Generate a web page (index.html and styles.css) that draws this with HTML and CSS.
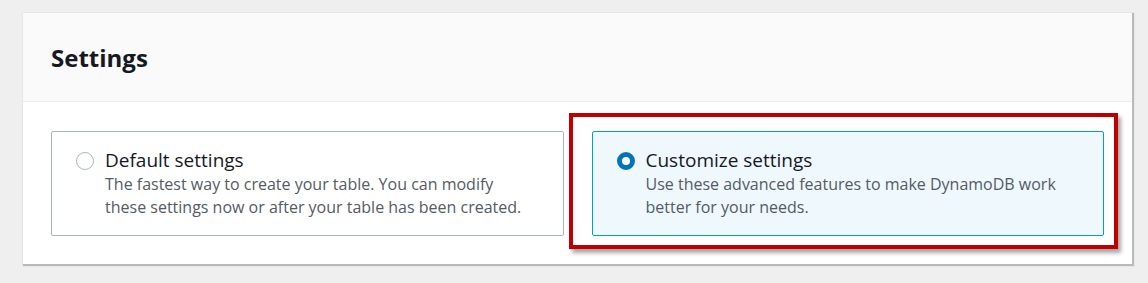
FILE: index.html
```html
<!DOCTYPE html>
<html lang="en">

<head>
  <meta charset="UTF-8" />
  <meta name="viewport" content="width=device-width, initial-scale=1.0" />
  <title>Settings</title>
  <link rel="stylesheet" href="styles.css">
</head>

<body>
  <section class="panel">
    <header class="panel-header">
      <h2>Settings</h2>
    </header>

    <div class="panel-body">
      <label class="tile">
        <span class="radio"></span>
        <span class="tile-text">
          <span class="tile-title">Default settings</span>
          <span class="tile-desc">The fastest way to create your table. You can modify these settings now or after your table has been created.</span>
        </span>
      </label>

      <label class="tile selected">
        <span class="radio"></span>
        <span class="tile-text">
          <span class="tile-title">Customize settings</span>
          <span class="tile-desc">Use these advanced features to make DynamoDB work better for your needs.</span>
        </span>
        <!-- highlight around the chosen option -->
        <span class="highlight"></span>
      </label>
    </div>
  </section>
</body>

</html>
```

FILE: styles.css
```css
/* Base */
body {
  margin: 0;
  padding: 13px 16px 19px 23px;
  background-color: #efefef;
  font-family: 'Open Sans', 'Liberation Sans', Arial, sans-serif;
  color: #16191f;
}

/* Panel */
.panel {
  background-color: #fff;
  box-shadow: 1px 1px 1px 1px rgba(0, 0, 0, 0.22);
}

.panel-header {
  background-color: #fafafa;
  border-bottom: 1px solid #eaeded;
  height: 88px;
  padding: 0 28px;
  display: flex;
  align-items: center;
}

.panel-header h2 {
  margin: 0;
  font-size: 24px;
  font-weight: 700;
  color: #16191f;
}

.panel-body {
  display: grid;
  grid-template-columns: 1fr 1fr;
  gap: 28px;
  padding: 29px 28px 28px;
}

/* Option tiles */
.tile {
  position: relative;
  display: flex;
  gap: 11px;
  height: 105px;
  box-sizing: border-box;
  padding: 15px 34px 15px 24px;
  border: 1px solid #aab7b8;
  border-radius: 2px;
  cursor: pointer;
}

.tile.selected {
  background-color: #eef8fd;
  border-color: #00a1c9;
}

.radio {
  flex: none;
  width: 18px;
  height: 18px;
  margin-top: 5px;
  box-sizing: border-box;
  border: 1.5px solid #aab7b8;
  border-radius: 50%;
  background-color: #fff;
}

.tile.selected .radio {
  border: 5px solid #0073bb;
}

.tile-text {
  display: flex;
  flex-direction: column;
}

.tile-title {
  font-size: 19px;
  line-height: 26px;
  color: #16191f;
}

.tile-desc {
  font-size: 16px;
  line-height: 22.5px;
  color: #545b64;
}

/* Red annotation box */
.highlight {
  position: absolute;
  left: -24px;
  right: -15px;
  top: -19px;
  bottom: -14px;
  border: 4px solid #c00000;
  box-shadow: 3px 4px 4px rgba(0, 0, 0, 0.35);
  pointer-events: none;
}
```
